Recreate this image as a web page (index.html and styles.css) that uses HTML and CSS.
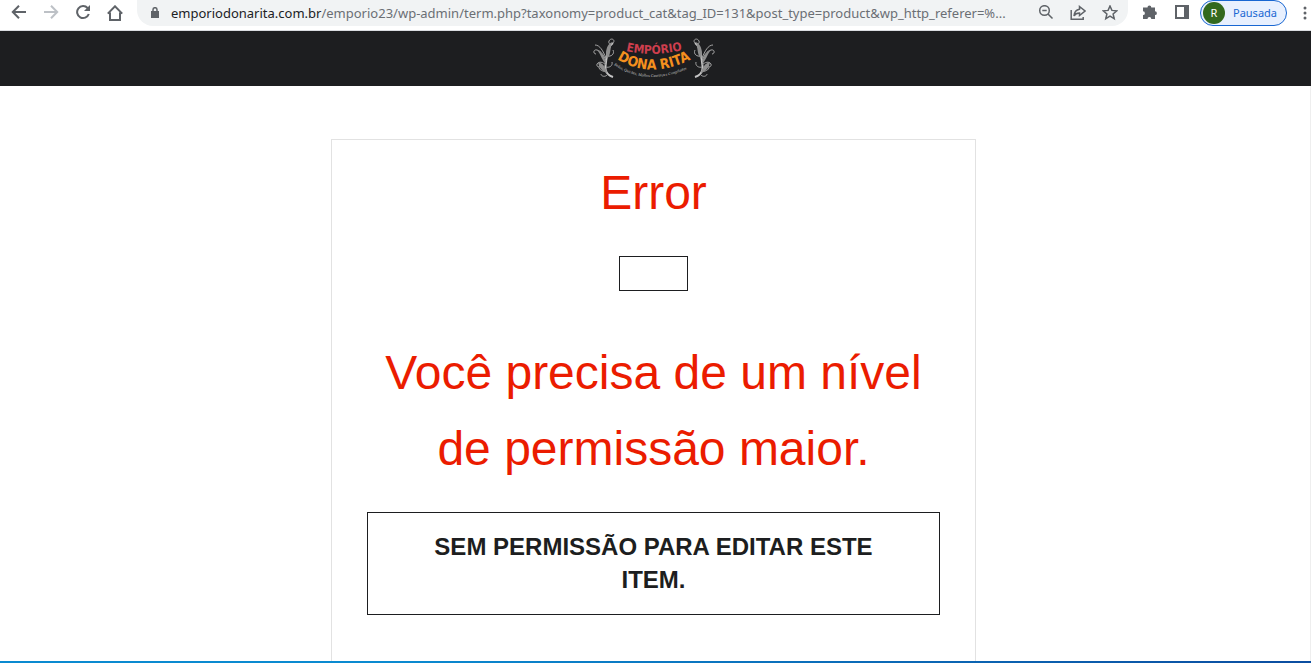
FILE: index.html
```html
<!DOCTYPE html>
<html lang="pt-BR">
<head>
<meta charset="utf-8">
<meta name="viewport" content="width=device-width,initial-scale=1">
<title>Empório Dona Rita – Error</title>
<link rel="stylesheet" href="styles.css">
</head>

<body>

<!-- BROWSER TOOLBAR -->
<div class="toolbar">
  <div class="nav-buttons">
    <button class="icon-btn" aria-label="Voltar"><svg viewBox="0 0 16 16"><path d="M15 7H2M8 .8L1.800 7 8 13.200"/></svg></button>
    <button class="icon-btn off" aria-label="Avançar" disabled><svg viewBox="0 0 16 16"><path d="M1 7h13M8 .8L14.200 7 8 13.200"/></svg></button>
    <button class="icon-btn" aria-label="Recarregar"><svg viewBox="0 0 16 16"><path d="M13.800 9A6 6 0 1 1 12.600 3l1.400 1.600"/><path class="fill" d="M15 0v6H9z"/></svg></button>
    <button class="icon-btn" aria-label="Página inicial"><svg viewBox="0 0 16 16"><path d="M.8 8.600L8 1.300l7.200 7.300M3 7.500V15h10V7.500"/></svg></button>
  </div>

  <div class="omnibox">
    <svg class="lock" viewBox="0 0 8 12"><path d="M0 4h8v7H0z"/><path class="shackle" d="M2 4.500V2.700a2 2 0 0 1 4 0v1.800"/></svg>
    <p class="url"><span class="host">emporiodonarita.com.br</span>/emporio23/wp-admin/term.php?taxonomy=product_cat&amp;tag_ID=131&amp;post_type=product&amp;wp_http_referer=%...</p>
    <div class="omni-actions">
      <button class="icon-btn thin" aria-label="Zoom"><svg viewBox="0 0 16 16"><circle cx="6.500" cy="5.500" r="4.800"/><path d="M10 9l4.500 4.500M4.300 5.500h4.400"/></svg></button>
      <button class="icon-btn thin" aria-label="Compartilhar"><svg viewBox="0 0 16 16"><path d="M1.200 5v9.300h12V12M9.500 1.500l5.500 4.500-5.500 4.500V8C7 8 5.300 8.700 4 11c.3-3.800 2.200-6.300 5.500-6.800z"/></svg></button>
      <button class="icon-btn thin" aria-label="Favoritar"><svg viewBox="0 0 16 16"><path d="M8 1l1.900 4.400 4.800.4-3.600 3.100 1.100 4.700L8 11.100l-4.200 2.500 1.100-4.700-3.600-3.100 4.800-.4z"/></svg></button>
    </div>
  </div>

  <div class="right-buttons">
    <button class="icon-btn" aria-label="Extensões"><svg viewBox="0 0 16 16"><path class="fill" d="M1 2.500h4.500a1.900 1.900 0 0 1 3.800 0H13V6.300a1.900 1.900 0 0 1 0 3.800V14H9.300a1.900 1.900 0 0 0-3.800 0H1v-3.900a1.900 1.900 0 0 0 0-3.800z"/></svg></button>
    <button class="icon-btn" aria-label="Painel lateral"><svg viewBox="0 0 16 16"><path class="fill" fill-rule="evenodd" d="M1 0h14v14H1zM3 2v10h7V2z"/></svg></button>
    <button class="profile"><span class="avatar">R</span>Pausada</button>
    <button class="menu" aria-label="Menu"><svg viewBox="0 0 4 16"><circle cx="2" cy="3" r="1.500"/><circle cx="2" cy="8" r="1.500"/><circle cx="2" cy="13" r="1.500"/></svg></button>
  </div>
</div>

<!-- SITE HEADER -->
<header class="site-header">
  <svg class="logo" viewBox="0 0 122 42" role="img" aria-label="Empório Dona Rita">
    <defs>
      <path id="arc-top" d="M33 13Q62 20 98 10"/>
      <path id="arc-mid" d="M24 21Q60 44 106 17"/>
      <path id="arc-low" d="M21 27Q58 52 106 25"/>
      <g id="flourish">
        <path class="stem" d="M20 39C11 36 12 29 13 24C14 17 14 9 20 5"/>
        <path d="M20 5C23 2 18-1 16 3C15 6 18 7 19 5M13 23C11 17 8 13 4 12C0 11 0 16 3 16M13 20C10 13 7 7 2 7M13 27C10 24 6 23 4 26C3 29 7 30 7 27M14 18C18 19 22 16 20 12M14 33C10 34 6 32 6 29M13 29C16 30 20 28 19 24M15 36C12 40 8 38 8 36"/>
        <path class="leaf" d="M19 4c-6 3-7 11-5 17c4-4 3-11 5-17zM4 12c4 1 8 6 9 14c-4-3-5-10-9-14zM5 24c5 1 8 6 9 11c-5-2-8-5-9-11z"/>
      </g>
    </defs>
    <use href="#flourish"/>
    <use href="#flourish" transform="matrix(-1 0 0 1 122 0)"/>
    <text class="t-top"><textPath href="#arc-top">EMPÓRIO</textPath></text>
    <text class="t-mid"><textPath href="#arc-mid">DONA RITA</textPath></text>
    <text class="t-low"><textPath href="#arc-low">Bolos, Quiches, Molhos Caseiros e Congelados</textPath></text>
  </svg>
</header>

<!-- ERROR CARD -->
<main>
  <section class="card">
    <h1>Error</h1>
    <button class="btn small" aria-label="Error"></button>
    <h2>Você precisa de um nível de permissão maior.</h2>
    <button class="btn wide">SEM PERMISSÃO PARA EDITAR ESTE ITEM.</button>
  </section>
</main>

<div class="taskbar"></div>

</body>
</html>
```
FILE: styles.css
```css
:root{
  --icon:#5f6368;
  --dark:#1d1e20;
  --red:#eb1c00;
}
*{box-sizing:border-box;margin:0;padding:0}
body{
  height:100vh;display:flex;flex-direction:column;overflow:hidden;
  font-family:"Liberation Sans",Arial,sans-serif;background:#fff;color:var(--dark);
}
button{background:none;border:0;font:inherit;color:inherit;cursor:pointer}

/* ---------- BROWSER TOOLBAR ---------- */
.toolbar{
  display:flex;align-items:flex-start;height:31px;flex:none;
  border-bottom:1px solid #dadce0;
  font-family:"Noto Sans","Segoe UI",sans-serif;
}
.nav-buttons,.right-buttons,.omni-actions{display:flex;align-items:center;gap:16px}
.nav-buttons,.right-buttons{height:25px}
.nav-buttons{padding:0 14px 0 11px}
.right-buttons{padding:0 4px 0 14px}
.icon-btn{width:16px;height:16px;flex:none}
.icon-btn svg{display:block;width:16px;height:16px;fill:none;stroke:var(--icon);stroke-width:2}
.icon-btn.off svg{stroke:#bdc1c6}
.icon-btn.thin svg{stroke-width:1.5}
.icon-btn .fill{fill:var(--icon);stroke:none}
.menu{width:4px;height:16px;flex:none}
.menu svg{display:block;width:4px;height:16px;fill:var(--icon)}

.omnibox{
  flex:1;min-width:0;display:flex;align-items:center;gap:12px;
  height:26px;padding:0 10px 0 14px;
  background:#f1f3f4;border-radius:0 0 16px 16px;
}
.lock{width:8px;height:12px;flex:none;fill:var(--icon)}
.lock .shackle{fill:none;stroke:var(--icon);stroke-width:1.5}
.url{flex:1;min-width:0;overflow:hidden;white-space:nowrap;font-size:13px;line-height:24px;color:#6b6f74}
.host{color:#202124}

.profile{
  display:flex;align-items:center;gap:8px;height:26px;padding:0 9px 0 2px;
  margin-left:-6px;
  border:1px solid #1967d2;border-radius:13px;background:#e8f0fe;
  font-size:11px;color:#1967d2;
}
.avatar{
  width:22px;height:22px;border-radius:50%;background:#33691e;color:#fff;
  line-height:22px;text-align:center;
}

/* ---------- SITE HEADER ---------- */
.site-header{
  flex:none;display:flex;justify-content:center;align-items:center;
  height:55px;padding-right:4px;background:var(--dark);
}
.logo{width:122px;height:42px}
.logo path{fill:none;stroke:#a4a4a4;stroke-width:1}
.logo .stem{stroke:#c4c4c4;stroke-width:2}
.logo .leaf{fill:#8e8e8e;stroke:none}
.logo text{font-family:"DejaVu Sans Condensed","DejaVu Sans",sans-serif;font-weight:700}
.logo .t-top{font-size:12px;fill:#cf3f4e}
.logo .t-mid{font-size:14px;fill:#f5901e}
.logo .t-low{font-family:"Liberation Serif",serif;font-size:4px;font-style:italic;font-weight:400;fill:#ccc}

/* ---------- ERROR CARD ---------- */
main{
  flex:1;min-height:0;display:flex;justify-content:center;overflow:hidden;
  padding:53px 3px 0 0;border-right:1px solid #eee;
}
.card{
  width:645px;height:700px;padding:15px 35px;text-align:center;
  border:1px solid #e2e2e2;
}
h1,h2{font-size:48px;line-height:76px;font-weight:400;color:var(--red)}
h2{margin-top:44px}
.btn{border:1px solid var(--dark);font-weight:700;font-size:24px;line-height:33px}
.small{display:block;width:69px;height:35px;margin:25px auto 0}
.wide{width:100%;margin-top:25px;padding:17px 60px 18px}

.taskbar{flex:none;height:2px;background:linear-gradient(90deg,#0a8ad0,#0a8ad0 30%,#0b4da0)}

@media(max-width:700px){
  .card{width:100%}
  h1,h2{font-size:36px;line-height:56px}
}
```
